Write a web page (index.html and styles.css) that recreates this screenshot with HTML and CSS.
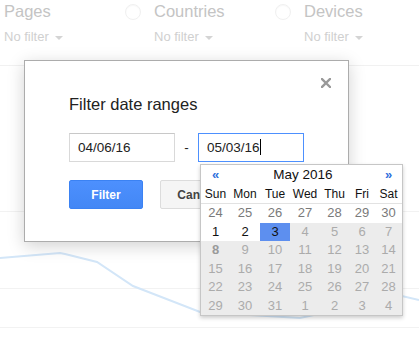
FILE: index.html
```html
<!DOCTYPE html>
<html lang="en">
<head>
    <meta charset="UTF-8">
    <meta name="viewport" content="width=device-width, initial-scale=1.0">
    <title>Filter date ranges</title>
    <link rel="stylesheet" href="styles.css">
</head>
<body>
    <div class="page">
        <div class="tabs">
            <div class="tab">
                <span class="radio"></span>
                <div>
                    <div class="tab-name">Pages</div>
                    <div class="tab-filter">No filter <span class="caret"></span></div>
                </div>
            </div>
            <div class="tab">
                <span class="radio"></span>
                <div>
                    <div class="tab-name">Countries</div>
                    <div class="tab-filter">No filter <span class="caret"></span></div>
                </div>
            </div>
            <div class="tab">
                <span class="radio"></span>
                <div>
                    <div class="tab-name">Devices</div>
                    <div class="tab-filter">No filter <span class="caret"></span></div>
                </div>
            </div>
        </div>

        <svg class="chart" width="419" height="271" viewBox="0 0 419 271">
            <g stroke="#f2f2f2" stroke-width="1">
                <line x1="0" y1="145.5" x2="419" y2="145.5"/>
                <line x1="0" y1="222.5" x2="419" y2="222.5"/>
                <line x1="0" y1="261.5" x2="419" y2="261.5"/>
            </g>
            <polyline fill="none" stroke="#d3e6f8" stroke-width="2"
                points="0,192 60,187 65,188 97,196 133,220 200,246 300,252 402,230 419,234"/>
        </svg>
    </div>

    <div class="dialog">
        <svg class="close" width="10" height="10" viewBox="0 0 10 10">
            <path d="M1 1 L9 9 M9 1 L1 9" stroke="#999" stroke-width="2.4" stroke-linecap="square"/>
        </svg>
        <h2>Filter date ranges</h2>
        <div class="date-row">
            <div class="date-input">04/06/16</div>
            <span class="dash">-</span>
            <div class="date-input focused">05/03/16<span class="cursor"></span></div>
        </div>
        <div class="buttons">
            <button class="btn btn-primary">Filter</button>
            <button class="btn">Cancel</button>
        </div>
    </div>

    <div class="datepicker">
        <div class="dp-head">
            <span class="dp-nav">&laquo;</span>
            <span class="dp-title">May 2016</span>
            <span class="dp-nav">&raquo;</span>
        </div>
        <div class="dp-grid">
            <span class="dow">Sun</span><span class="dow">Mon</span><span class="dow">Tue</span><span class="dow">Wed</span><span class="dow">Thu</span><span class="dow">Fri</span><span class="dow">Sat</span>

            <span class="day old">24</span><span class="day old">25</span><span class="day old">26</span><span class="day old">27</span><span class="day old">28</span><span class="day old">29</span><span class="day old">30</span>

            <span class="day">1</span><span class="day">2</span><span class="day selected">3</span><span class="day off">4</span><span class="day off">5</span><span class="day off">6</span><span class="day off">7</span>

            <span class="day off today">8</span><span class="day off">9</span><span class="day off">10</span><span class="day off">11</span><span class="day off">12</span><span class="day off">13</span><span class="day off">14</span>

            <span class="day off">15</span><span class="day off">16</span><span class="day off">17</span><span class="day off">18</span><span class="day off">19</span><span class="day off">20</span><span class="day off">21</span>

            <span class="day off">22</span><span class="day off">23</span><span class="day off">24</span><span class="day off">25</span><span class="day off">26</span><span class="day off">27</span><span class="day off">28</span>

            <span class="day off">29</span><span class="day off">30</span><span class="day off">31</span><span class="day off">1</span><span class="day off">2</span><span class="day off">3</span><span class="day off">4</span>
        </div>
    </div>
</body>
</html>
```

FILE: styles.css
```css
* {
    margin: 0;
    padding: 0;
    box-sizing: border-box;
}

body {
    font-family: "Liberation Sans", Arial, sans-serif;
    background: #fff;
    width: 419px;
    height: 337px;
    overflow: hidden;
    position: relative;
}

/* faded page behind the dialog */
.tabs {
    display: flex;
    margin-left: -25px;
    height: 66px;
    border-bottom: 1px solid #f1f1f1;
}

.tab {
    width: 150px;
    display: flex;
    gap: 13px;
    flex-shrink: 0;
}

.radio {
    width: 16px;
    height: 16px;
    margin-top: 4px;
    border-radius: 50%;
    border: 1px solid #f0f0f0;
    box-shadow: inset 0 1px 1px rgba(0, 0, 0, 0.03);
}

.tab-name {
    font-size: 16.5px;
    line-height: 20px;
    padding-top: 1px;
    color: #c4c4c4;
}

.tab-filter {
    margin-top: 8px;
    font-size: 13px;
    line-height: 16px;
    color: #d0d0d0;
}

.caret {
    display: inline-block;
    margin-left: 3px;
    vertical-align: middle;
    border-left: 4px solid transparent;
    border-right: 4px solid transparent;
    border-top: 4px solid #d4d4d4;
}

.chart {
    display: block;
}

/* dialog */
.dialog {
    position: absolute;
    left: 24px;
    top: 60px;
    width: 325px;
    height: 182px;
    background: #fff;
    border: 1px solid #acacac;
    box-shadow: 0 4px 16px rgba(0, 0, 0, 0.18);
    padding: 33px 44px 0;
}

.close {
    position: absolute;
    top: 17px;
    right: 17px;
}

.dialog h2 {
    font-size: 16.5px;
    font-weight: normal;
    line-height: 20px;
    color: #222;
    margin-bottom: 19px;
}

.date-row {
    display: flex;
    align-items: center;
}

.date-input {
    width: 106px;
    height: 29px;
    border: 1px solid #d9d9d9;
    border-top-color: #c8c8c8;
    padding: 0 8px;
    font-size: 13.5px;
    line-height: 27px;
    color: #222;
}

.date-input.focused {
    border-color: #4d90fe;
}

.cursor {
    display: inline-block;
    width: 1px;
    height: 16px;
    background: #000;
    vertical-align: -3px;
}

.dash {
    width: 23px;
    text-align: center;
    font-size: 13.5px;
    color: #222;
}

.buttons {
    display: flex;
    gap: 17px;
    margin-top: 18px;
}

.btn {
    width: 74px;
    height: 29px;
    font-family: inherit;
    font-size: 12px;
    font-weight: bold;
    color: #444;
    background: #f5f5f5;
    border: 1px solid #dcdcdc;
    border-radius: 2px;
}

.btn-primary {
    color: #fff;
    background: linear-gradient(#4d90fe, #4387f5);
    border-color: #3b82f3;
}

/* date picker popup */
.datepicker {
    position: absolute;
    left: 200px;
    top: 164px;
    width: 203px;
    background: #fff;
    border: 1px solid #c6c6c6;
    box-shadow: 0 2px 4px rgba(0, 0, 0, 0.2);
}

.dp-head {
    display: grid;
    grid-template-columns: 29px 1fr 27px;
    height: 20px;
    line-height: 20px;
    text-align: center;
}

.dp-nav {
    color: #2f6fdc;
    font-size: 13px;
    font-weight: bold;
}

.dp-title {
    font-size: 13.5px;
    color: #111;
    padding-left: 1px;
}

.dp-grid {
    display: grid;
    grid-template-columns: 29px 30px 30px 30px 29px 26px 27px;
    grid-template-rows: 19px;
    grid-auto-rows: 18.5px;
    text-align: center;
}

.dow {
    font-size: 12px;
    line-height: 18px;
    color: #111;
    border-bottom: 1px solid #e2e2e2;
}

.day {
    font-size: 13px;
    line-height: 18.5px;
    color: #111;
}

.day.old {
    color: #7a7a7a;
}

.day.selected {
    background: #5d8fef;
    color: #111;
}

.day.off {
    background: #ececec;
    color: #ababab;
}

.day.today {
    font-weight: bold;
    color: #9a9a9a;
}
```
